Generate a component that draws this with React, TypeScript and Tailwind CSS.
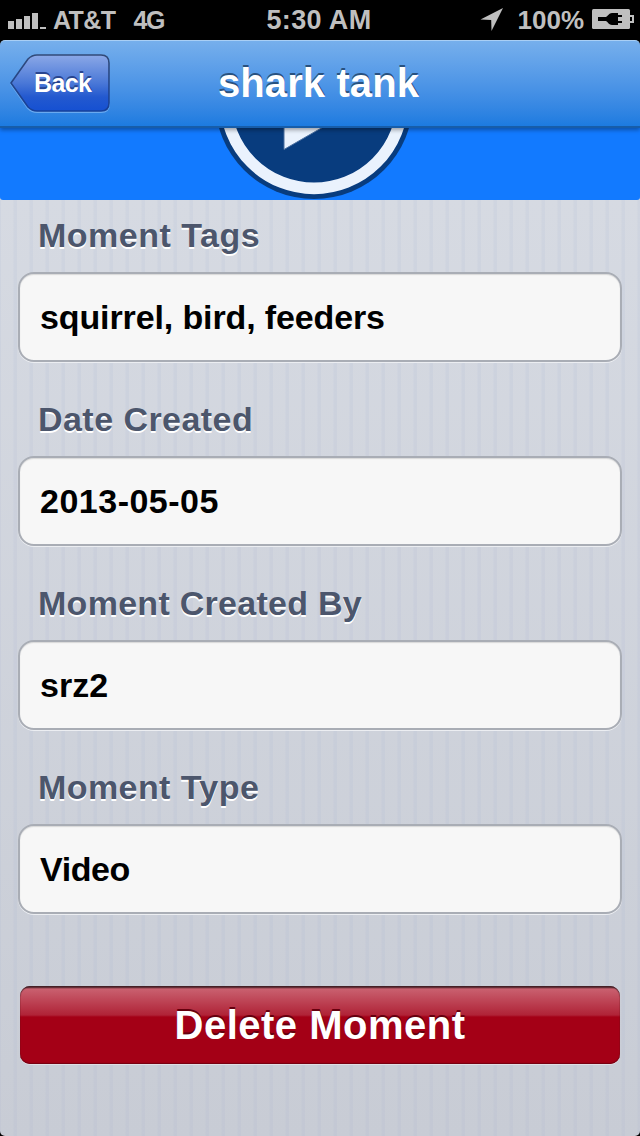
const fields = [
  { label: "Moment Tags", labelSpacing: "tracking-[0.5px]", value: "squirrel, bird, feeders", spacing: "tracking-[-0.12px]" },
  { label: "Date Created", labelSpacing: "tracking-[0.45px]", value: "2013-05-05", spacing: "tracking-[0.5px]" },
  { label: "Moment Created By", labelSpacing: "tracking-[0.28px]", value: "srz2", spacing: "tracking-normal" },
  { label: "Moment Type", labelSpacing: "tracking-[0.42px]", value: "Video", spacing: "tracking-[-0.4px]" },
];

function StatusBar() {
  return (
    <div className="relative flex h-10 shrink-0 items-center justify-between bg-black pl-2 pr-[6px] text-[26px] font-bold leading-10 text-[#bfbfbf]">
      <div className="flex items-center text-[25px]">
        <svg width="38" height="16" className="mt-[2px]" fill="#bfbfbf" shapeRendering="crispEdges">
          <path d="M0 8h6v8H0zM8 6h6v10H8zM16 3h6v13h-6zM24 0h6v16h-6zM32 14h6v2h-6z" />
        </svg>
        <span className="ml-[7px] tracking-[-0.6px]">AT&amp;T</span>
        <span className="ml-[18px] tracking-[-1.2px]">4G</span>
      </div>
      <div className="absolute inset-x-0 text-center text-[27px] tracking-[0.35px]">
        <span className="mr-[2px]">5:30 AM</span>
      </div>
      <div className="flex items-center">
        <svg width="24" height="24" fill="#bfbfbf">
          <path d="M0.5 11.5 23 0 11.5 23 11.2 12Z" />
        </svg>
        <span className="ml-[14px] mr-[1px]">100%</span>
        <svg width="42" height="20" viewBox="0 0 42 20" className="-mt-[2px] ml-[7px]">
          <rect width="38" height="20" rx="1.5" fill="#bfbfbf" />
          <path d="M38 7h3v6h-3" fill="none" stroke="#bfbfbf" strokeWidth="2" />
          <path d="M6 8h8c2-1 3-4 6-4h6v2h4v2h-4v4h4v2h-4v2h-6c-3 0-4-3-6-4H6z" fill="#000" />
        </svg>
      </div>
    </div>
  );
}

function NavBar() {
  return (
    <header className="relative z-10 flex h-[88px] shrink-0 items-center justify-center rounded-t-[5px] border-b-2 border-t border-b-[#175da9] border-t-[#a9cff5] bg-linear-to-b from-[#76afec] to-[#1c7be0] pb-[1px] shadow-[0_2px_4px_rgba(0,0,0,0.35)]">
      <button className="absolute left-[10px] top-[13px] flex h-[59px] w-[100px] items-center pl-6 text-[25px] font-bold tracking-[-0.6px] text-white [text-shadow:0_-2px_0_#28458f]">
        <svg width="100" height="60" viewBox="0 0 100 60" className="absolute left-0 top-0">
          <defs>
            <linearGradient id="back" x1="0" y1="0" x2="0" y2="1">
              <stop offset="0" stopColor="#8ba8e7" />
              <stop offset="0.5" stopColor="#4a78d7" />
              <stop offset="0.75" stopColor="#2359cf" />
              <stop offset="1" stopColor="#1550d2" />
            </linearGradient>
            <linearGradient id="edge" x1="0" y1="0" x2="0" y2="1">
              <stop offset="0" stopColor="#314a78" />
              <stop offset="1" stopColor="#164099" />
            </linearGradient>
          </defs>
          <path d="M1 30 18 6Q22 2 27 2H91Q99 2 99 10V50Q99 58 91 58H27Q22 58 18 54Z" fill="none" stroke="#69aaf0" strokeWidth="2" />
          <path d="M1 29 18 5Q22 1 27 1H91Q99 1 99 9V49Q99 57 91 57H27Q22 57 18 53Z" fill="url(#back)" stroke="url(#edge)" strokeWidth="1.6" />
        </svg>
        <span className="relative">Back</span>
      </button>
      <h1 className="mr-[3px] text-[40px] font-bold leading-[48px] tracking-[0.1px] text-white [text-shadow:0_-2px_0_#28517f]">shark tank</h1>
    </header>
  );
}

function VideoPreview() {
  return (
    <div className="h-[72px] shrink-0 overflow-hidden rounded-b-[3px] bg-[#127aff]">
      <svg width="640" height="72" viewBox="0 128 640 72">
        <circle cx="314" cy="100" r="99" fill="#083c7e" />
        <circle cx="314" cy="100" r="88.4" fill="#083c7e" stroke="#eaf2fd" strokeWidth="11.6" />
        <path d="M284 50V149.500L370 100Z" fill="#eaf2fd" stroke="#4b6f9f" strokeWidth="1" />
      </svg>
    </div>
  );
}

export default function App() {
  return (
    <div className="h-[1136px] w-[640px] overflow-hidden bg-black font-['Liberation_Sans',Arial,sans-serif]">
      <div className="flex h-full flex-col overflow-hidden rounded-b-[5px] bg-[linear-gradient(90deg,transparent_0_12px,rgba(150,165,205,0.1)_13px_16px,transparent_16px),linear-gradient(#d9dde5,#c8ccd5)] bg-[size:16px_100%,100%_100%] bg-[position:1px_0,0_0]">
        <StatusBar />
        <div className="flex flex-col bg-black">
          <NavBar />
        </div>
        <VideoPreview />
        <main className="flex flex-col px-[18px]">
          {fields.map(({ label, labelSpacing, value, spacing }) => (
            <section key={label} className="flex h-[184px] flex-col">
              <h2 className={`${labelSpacing} h-[72px] pl-5 text-[34px] font-bold leading-[70px] text-[#4c566c] [text-shadow:0_2px_0_#fff]`}>{label}</h2>
              <div className={`${spacing} flex h-[90px] items-center rounded-[16px] border-2 border-[#a9adb5] bg-[#f7f7f7] pl-5 text-[34px] font-bold text-black shadow-[0_1px_0_#eceef2,inset_0_1px_1px_#d8d8d8]`}>
                {value}
              </div>
            </section>
          ))}
          <button className="mx-[2px] mt-[50px] flex h-[78px] items-center justify-center rounded-[10px] bg-[linear-gradient(#4c2027_0,#4c2027_1px,#c9606f_3px,#b02337_29px,#a40016_31px)] text-[40px] font-bold tracking-[0.5px] text-white shadow-[0_1px_0_#dfdfe5,inset_0_1px_1px_#452127,inset_0_-1px_1px_#740012] [text-shadow:0_-2px_0_#65000e]">
            Delete Moment
          </button>
        </main>
      </div>
    </div>
  );
}
